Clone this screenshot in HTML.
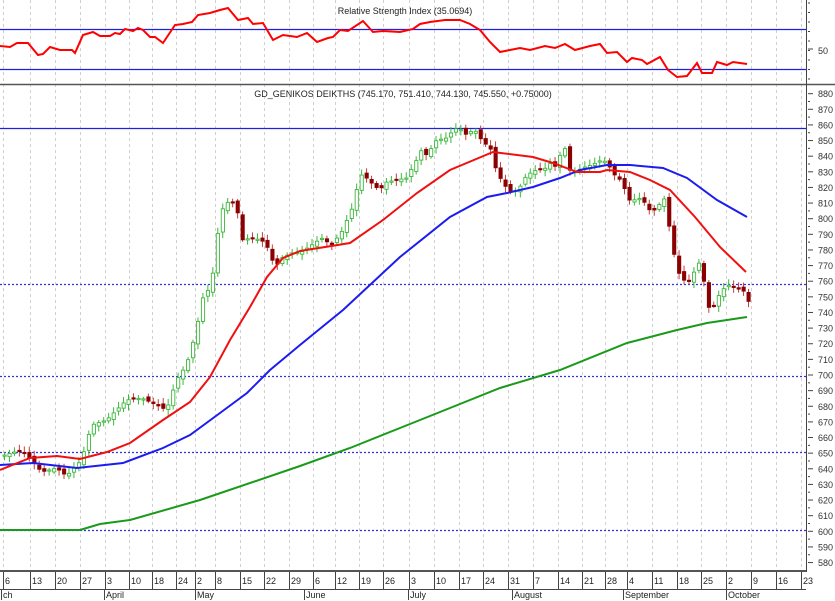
<!DOCTYPE html>
<html><head><meta charset="utf-8"><style>
html,body{margin:0;padding:0;background:#fff;}
svg{display:block;font-family:"Liberation Sans",sans-serif;}
</style></head><body>
<svg id="s" width="835" height="601" viewBox="0 0 835 601" xmlns="http://www.w3.org/2000/svg">
<rect width="835" height="601" fill="#fff"/>
<g id="grid"></g>
<text x="405" y="14" font-size="9" text-anchor="middle" fill="#222">Relative Strength Index (35.0694)</text>
<line x1="0" y1="29.5" x2="806" y2="29.5" stroke="#2020e0" stroke-width="1.2"/>
<line x1="0" y1="69.5" x2="806" y2="69.5" stroke="#2020e0" stroke-width="1.2"/>
<polyline fill="none" stroke="#f00" stroke-width="2" points="0,46 10,47 17,43 28,43 38,55 43,54 50,47 60,50 72,50 75,53 83,35 93,32 100,36 110,36 115,33 120,34 125,29 133,31 138,28 143,30 150,37 155,37 163,43 175,25 183,24 192,22 198,15 210,13 220,10 228,8 238,20 248,18 253,24 263,23 273,40 283,35 297,37 307,33 317,42 328,38 333,37 340,30 348,31 363,21 373,32 383,31 400,32 413,29 420,24 430,22 445,20 460,20 470,24 480,30 490,42 500,52 510,50 520,48 530,50 545,46 555,48 565,44 575,50 590,46 600,44 607,53 617,52 627,62 632,58 642,60 647,64 660,57 668,70 677,77 687,76 697,63 702,73 712,73 717,62 727,65 733,62 747,64"/>
<text x="818" y="54" font-size="9" fill="#333">50</text>
<line x1="0" y1="84.5" x2="835" y2="84.5" stroke="#555" stroke-width="1.5"/>
<text x="403" y="97" font-size="9" text-anchor="middle" fill="#222">GD_GENIKOS DEIKTHS (745.170, 751.410, 744.130, 745.550, +0.75000)</text>
<line x1="0" y1="128.5" x2="806" y2="128.5" stroke="#2020e0" stroke-width="1.2"/>
<g stroke="#3030e0" stroke-width="1.2" stroke-dasharray="2,2">
<line x1="0" y1="284.5" x2="806" y2="284.5"/>
<line x1="0" y1="376.5" x2="806" y2="376.5"/>
<line x1="0" y1="452.5" x2="806" y2="452.5"/>
<line x1="0" y1="530.5" x2="806" y2="530.5"/>
</g>
<g id="candles"></g>
<polyline fill="none" stroke="#1a9a1a" stroke-width="2" points="0,530 80,530 100,524 130,520 200,500 300,466 350,448 400,428 450,408 500,388 560,370 627,343 677,330 707,323 747,317"/>
<polyline fill="none" stroke="#1c1cf0" stroke-width="2" points="0,465 33,463 77,468 123,463 163,448 190,435 220,413 247,393 270,370 300,345 343,310 400,257 450,217 487,197 507,193 533,187 560,178 580,170 607,165 630,165 663,168 687,178 717,200 747,217"/>
<polyline fill="none" stroke="#f01010" stroke-width="2" points="0,470 30,458 57,456 80,459 107,452 130,443 163,420 190,402 210,377 230,340 250,307 267,277 283,258 300,251 350,243 383,220 417,193 450,170 493,152 533,157 553,163 577,172 600,172 607,170 630,172 650,180 670,190 695,217 720,247 746,272"/>
<line x1="806.5" y1="0" x2="806.5" y2="572" stroke="#444" stroke-width="1"/>
<g id="axis"></g>
<rect x="0" y="570" width="806" height="2" fill="#555"/>
<line x1="0" y1="589.5" x2="806" y2="589.5" stroke="#444"/>
<g id="dates" font-size="9" fill="#222"></g>
</svg>
<script>
(function(){
var NS="http://www.w3.org/2000/svg";
function el(p,t,a){var e=document.createElementNS(NS,t);for(var k in a)e.setAttribute(k,a[k]);p.appendChild(e);return e;}
var ticks=[[3,"6"],[30,"13"],[55,"20"],[80,"27"],[105,"3"],[129,"10"],[152,"18"],[176,"24"],[195,"2"],[215,"8"],[240,"15"],[264,"22"],[289,"29"],[313,"6"],[335,"12"],[359,"19"],[383,"26"],[409,"3"],[434,"10"],[459,"17"],[483,"24"],[508,"31"],[533,"7"],[558,"14"],[582,"21"],[605,"28"],[627,"4"],[652,"11"],[677,"18"],[701,"25"],[726,"2"],[751,"9"],[776,"16"],[801,"23"]];
var g=document.getElementById("grid"),d=document.getElementById("dates");
ticks.forEach(function(t){
 el(g,"line",{x1:t[0]+.5,y1:0,x2:t[0]+.5,y2:570,stroke:"#d0d0d0","stroke-dasharray":"3,3"});
 el(d,"line",{x1:t[0]+.5,y1:572,x2:t[0]+.5,y2:589,stroke:"#444"});
 var tx=el(d,"text",{x:t[0]+2,y:584});tx.textContent=t[1];
});
[[1,"ch"],[104,"April"],[195,"May"],[304,"June"],[408,"July"],[512,"August"],[623,"September"],[726,"October"]].forEach(function(m){
 el(d,"line",{x1:m[0]+.5,y1:589,x2:m[0]+.5,y2:600,stroke:"#444"});
 var tx=el(d,"text",{x:m[0]+2,y:598});tx.textContent=m[1];
});
var ax=document.getElementById("axis");
for(var p=580;p<=880;p+=5){
 var yy=375+(700-p)*1.563;
 var lab=(p%10==0);
 el(ax,"line",{x1:808,y1:yy,x2:lab?813:810,y2:yy,stroke:"#444"});
 if(lab){var tx=el(ax,"text",{x:818,y:yy+3.5,"font-size":"9",fill:"#333"});tx.textContent=p;}
}
for(var q=3;q<80;q+=9.5){el(ax,"line",{x1:808,y1:q,x2:810,y2:q,stroke:"#444"});}
el(ax,"line",{x1:808,y1:49,x2:813,y2:49,stroke:"#444"});
var kf=[[3,455],[20,450],[30,460],[40,472],[55,468],[65,476],[80,460],[90,425],[105,420],[115,410],[125,400],[140,398],[155,405],[165,410],[175,380],[185,365],[195,330],[200,300],[210,285],[215,240],[222,205],[230,200],[236,212],[240,240],[250,238],[260,240],[268,250],[273,268],[280,258],[290,253],[300,252],[313,243],[320,238],[330,245],[340,232],[350,210],[355,190],[360,175],[365,178],[372,185],[378,190],[385,182],[395,180],[405,178],[415,160],[420,150],[425,155],[430,148],[435,140],[445,138],[452,130],[458,127],[462,135],[468,133],[472,128],[480,140],[485,145],[490,150],[495,172],[500,180],[505,188],[510,192],[515,190],[520,185],[525,175],[535,170],[545,168],[550,162],[555,168],[560,150],[565,148],[568,170],[575,172],[580,168],[590,165],[600,160],[605,162],[610,170],[615,178],[620,180],[627,200],[632,200],[640,198],[648,210],[655,210],[660,200],[665,198],[668,230],[672,252],[678,275],[685,283],[690,278],[695,266],[700,260],[705,305],[710,310],[715,300],[720,290],[725,287],[730,283],[735,292],[740,285],[745,300],[748,302]];
function at(x){for(var i=1;i<kf.length;i++){if(x<=kf[i][0]){var a=kf[i-1],b=kf[i];return a[1]+(b[1]-a[1])*(x-a[0])/(b[0]-a[0]);}}return kf[kf.length-1][1];}
var cg=document.getElementById("candles");var prev=at(3)+2;
for(var x=3;x<=749;x+=4.96){
 var c=at(x);var o=prev+Math.sin(x*1.7)*2;
 var bt=Math.min(o,c),bb=Math.max(o,c);
 var hi=bt-2-Math.abs(Math.sin(x*3.1))*4,lo=bb+2+Math.abs(Math.cos(x*2.3))*4;
 var up=c<o;var col=up?"#3cb83c":"#8b0000";var wc=up?"#3cb83c":"#c04040";
 el(cg,"line",{x1:x+1.5,y1:hi,x2:x+1.5,y2:lo,stroke:wc,"stroke-width":1});
 el(cg,"rect",{x:x,y:bt,width:3.2,height:Math.max(1.2,bb-bt),fill:up?"#fff":col,stroke:col,"stroke-width":0.9});
 prev=c;
}
})();
</script>
</body></html>
